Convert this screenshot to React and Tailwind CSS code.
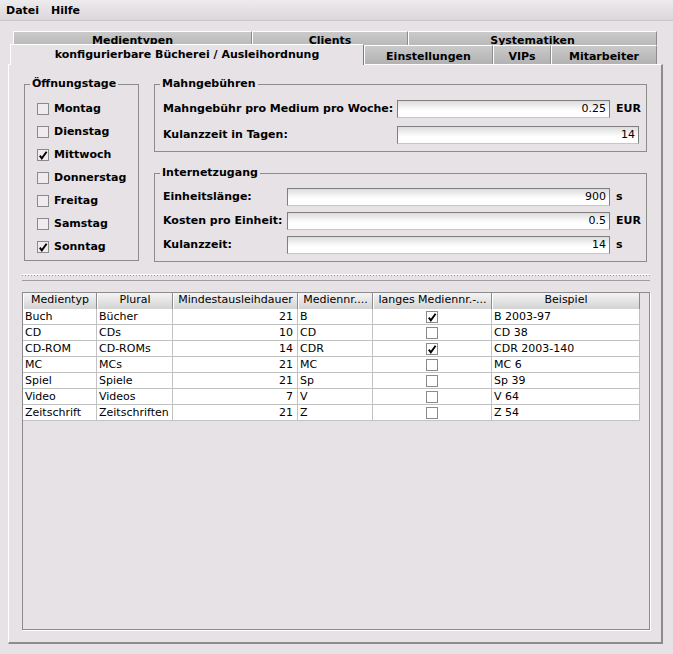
import React from 'react'

const BACK_TABS = [
  { label: 'Medientypen', w: 'w-[239px]' },
  { label: 'Clients', w: 'w-[156px]' },
  { label: 'Systematiken', w: 'w-[249px]' },
]

const FRONT_TABS = [
  { label: 'Einstellungen', w: 'w-[129px]' },
  { label: 'VIPs', w: 'w-[58px]' },
  { label: 'Mitarbeiter', w: 'w-[106px]' },
]

const DAYS = [
  ['Montag', false],
  ['Dienstag', false],
  ['Mittwoch', true],
  ['Donnerstag', false],
  ['Freitag', false],
  ['Samstag', false],
  ['Sonntag', true],
]

const COLUMNS = ['Medientyp', 'Plural', 'Mindestausleihdauer', 'Mediennr....', 'langes Mediennr.-...', 'Beispiel']

const MEDIA = [
  ['Buch', 'Bücher', 21, 'B', true, 'B 2003-97'],
  ['CD', 'CDs', 10, 'CD', false, 'CD 38'],
  ['CD-ROM', 'CD-ROMs', 14, 'CDR', true, 'CDR 2003-140'],
  ['MC', 'MCs', 21, 'MC', false, 'MC 6'],
  ['Spiel', 'Spiele', 21, 'Sp', false, 'Sp 39'],
  ['Video', 'Videos', 7, 'V', false, 'V 64'],
  ['Zeitschrift', 'Zeitschriften', 21, 'Z', false, 'Z 54'],
]

function CheckBox({ checked, white }) {
  return (
    <span
      className={`flex h-[12px] w-[12px] shrink-0 items-center justify-center border border-[#8a8a8a] ${
        white ? 'bg-white' : 'bg-[#efecef]'
      }`}
    >
      {checked && (
        <svg width="10" height="10" viewBox="0 0 10 10">
          <path d="M1.8 5.6 L3.8 8.3 L8.6 1.8" fill="none" stroke="#000" strokeWidth="1.9" />
        </svg>
      )}
    </span>
  )
}

function Field({ value, span }) {
  return (
    <div
      className={`h-[18px] border border-[#7f7f7f] border-b-[#c6c6c6] bg-[linear-gradient(#dcdcdc,#ffffff_60%)] pr-[3px] text-right leading-[16px] ${
        span ? 'col-span-2' : ''
      }`}
    >
      {value}
    </div>
  )
}

function Unit({ children }) {
  return <span className="pl-[6px] font-bold leading-[14px]">{children}</span>
}

function Label({ children }) {
  return <span className="font-bold leading-[14px] whitespace-nowrap">{children}</span>
}

export default function App() {
  return (
    <div className="h-[654px] w-[673px] overflow-hidden bg-[#e6e2e6] font-['DejaVu_Sans',sans-serif] text-[11px] text-black">
      {/* menu bar */}
      <div className="flex h-[21px] items-start border-b border-[#c8c4c8] bg-[linear-gradient(#eeebee,#dbd7db)] pt-[4px] font-bold leading-[14px]">
        <span className="px-[6px]">Datei</span>
        <span className="px-[6px]">Hilfe</span>
      </div>

      {/* tabs */}
      <div className="pt-[10px]">
        <div className="flex h-[14px] overflow-hidden pl-[13px]">
          {BACK_TABS.map((t) => (
            <div
              key={t.label}
              className={`${t.w} h-[20px] shrink-0 border-t border-l border-r border-white border-r-[#8c8c8c] bg-[linear-gradient(#cacaca,#b2b2b2)] pt-[2px] text-center font-bold leading-[14px]`}
            >
              {t.label}
            </div>
          ))}
        </div>
        <div className="flex h-[19px] items-end pl-[10px]">
          <div className="relative z-10 -mb-px h-[21px] w-[354px] shrink-0 border-t border-l border-r border-white border-r-[#7c7c7c] bg-[#e6e2e6] pt-[3px] text-center font-bold leading-[14px]">
            konfigurierbare Bücherei / Ausleihordnung
          </div>
          {FRONT_TABS.map((t) => (
            <div
              key={t.label}
              className={`${t.w} h-[19px] shrink-0 border-t border-l border-r border-white border-r-[#8c8c8c] bg-[linear-gradient(#cacaca,#b2b2b2)] pt-[4px] text-center font-bold leading-[14px]`}
            >
              {t.label}
            </div>
          ))}
        </div>
      </div>

      {/* content panel */}
      <div className="ml-[8px] h-[580px] w-[655px] border-t border-l border-r-2 border-b-2 border-white border-r-[#8c8c8c] border-b-[#8c8c8c] pt-[12px] pr-[11px] pl-[13px]">
        <div className="flex gap-[15px] pl-[2px]">
          <fieldset className="h-[184px] w-[115px] shrink-0 border border-[#8c8c8c]">
            <legend className="ml-[5px] px-[2px] font-bold leading-[14px]">Öffnungstage</legend>
            <div className="flex flex-col pt-[6px] pl-[12px]">
              {DAYS.map(([day, on]) => (
                <div key={day} className="flex h-[23px] items-center gap-[5px]">
                  <CheckBox checked={on} />
                  <span className="font-bold leading-[14px]">{day}</span>
                </div>
              ))}
            </div>
          </fieldset>

          <div className="flex w-[493px] flex-col">
            <fieldset className="h-[75px] border border-[#8c8c8c]">
              <legend className="ml-[5px] px-[2px] font-bold leading-[14px]">Mahngebühren</legend>
              <div className="grid grid-cols-[234px_213px_29px] items-center gap-y-[8px] pt-[9px] pl-[8px]">
                <Label>Mahngebühr pro Medium pro Woche:</Label>
                <Field value="0.25" />
                <Unit>EUR</Unit>
                <Label>Kulanzzeit in Tagen:</Label>
                <Field value="14" span />
              </div>
            </fieldset>

            <fieldset className="mt-[14px] h-[96px] border border-[#8c8c8c]">
              <legend className="ml-[5px] px-[2px] font-bold leading-[14px]">Internetzugang</legend>
              <div className="grid grid-cols-[124px_323px_29px] items-center gap-y-[6px] pt-[8px] pl-[8px]">
                <Label>Einheitslänge:</Label>
                <Field value="900" />
                <Unit>s</Unit>
                <Label>Kosten pro Einheit:</Label>
                <Field value="0.5" />
                <Unit>EUR</Unit>
                <Label>Kulanzzeit:</Label>
                <Field value="14" />
                <Unit>s</Unit>
              </div>
            </fieldset>
          </div>
        </div>

        {/* split pane divider */}
        <div className="mt-[12px] h-[7px] border-t border-b border-white border-b-[#9f9f9f]">
          <div className="h-px bg-[repeating-linear-gradient(90deg,#9a9a9a_0px,#9a9a9a_1px,transparent_1px,transparent_3px)]" />
        </div>

        {/* table */}
        <div className="mt-[11px] h-[338px] border border-[#8c8c8c] bg-[#e6e2e6] shadow-[1px_1px_0_#ffffff]">
          <div className="grid w-[617px] grid-cols-[74px_76px_125px_75px_119px_148px]">
            {COLUMNS.map((c) => (
              <div
                key={c}
                className="h-[16px] overflow-hidden border-l border-r border-white border-r-[#8c8c8c] bg-[linear-gradient(#f4f4f4,#d3d3d3)] text-center leading-[14px] whitespace-nowrap"
              >
                {c}
              </div>
            ))}
            {MEDIA.map(([typ, plural, dauer, nr, lang, beispiel]) => (
              <React.Fragment key={typ}>
                <div className="h-[16px] border-r border-b border-[#c2c2c2] bg-white pl-[2px] leading-[15px]">{typ}</div>
                <div className="h-[16px] border-r border-b border-[#c2c2c2] bg-white pl-[2px] leading-[15px]">{plural}</div>
                <div className="h-[16px] border-r border-b border-[#c2c2c2] bg-white pr-[4px] text-right leading-[15px]">{dauer}</div>
                <div className="h-[16px] border-r border-b border-[#c2c2c2] bg-white pl-[2px] leading-[15px]">{nr}</div>
                <div className="flex h-[16px] items-center justify-center border-r border-b border-[#c2c2c2] bg-white">
                  <CheckBox checked={lang} white />
                </div>
                <div className="h-[16px] border-r border-b border-[#c2c2c2] bg-white pl-[2px] leading-[15px]">{beispiel}</div>
              </React.Fragment>
            ))}
          </div>
        </div>
      </div>
    </div>
  )
}
